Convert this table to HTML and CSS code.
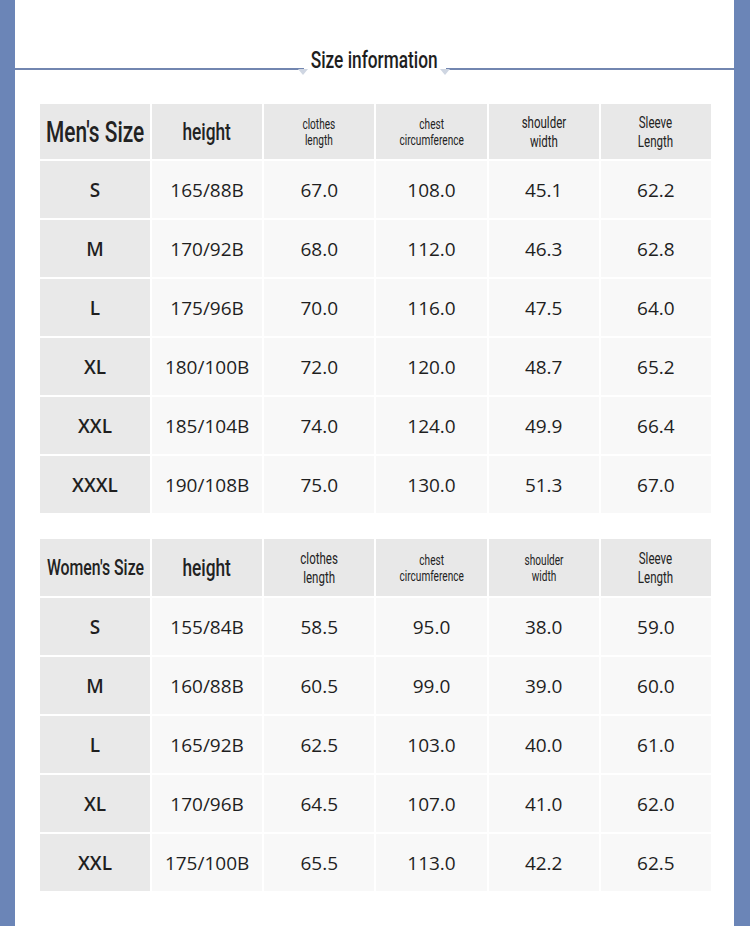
FILE: index.html
```html
<!DOCTYPE html>
<html lang="en">
<head>
<meta charset="utf-8">
<title>Size information</title>
<link rel="stylesheet" href="styles.css">
</head>
<body>
<div class="panel">
  <div class="heading">
    <div class="rule rule-left"></div>
    <div class="title"><span class="cond">Size information</span></div>
    <div class="rule rule-right"></div>
  </div>

  <div class="table men">
    <div class="hd big"><span class="cond">Men's Size</span></div>
    <div class="hd mid"><span class="cond">height</span></div>
    <div class="hd tiny"><span class="cond">clothes<br>length</span></div>
    <div class="hd tiny"><span class="cond">chest<br>circumference</span></div>
    <div class="hd small"><span class="cond">shoulder<br>width</span></div>
    <div class="hd small"><span class="cond">Sleeve<br>Length</span></div>

    <div class="sz">S</div><div class="cell">165/88B</div><div class="cell">67.0</div><div class="cell">108.0</div><div class="cell">45.1</div><div class="cell">62.2</div>
    <div class="sz">M</div><div class="cell">170/92B</div><div class="cell">68.0</div><div class="cell">112.0</div><div class="cell">46.3</div><div class="cell">62.8</div>
    <div class="sz">L</div><div class="cell">175/96B</div><div class="cell">70.0</div><div class="cell">116.0</div><div class="cell">47.5</div><div class="cell">64.0</div>
    <div class="sz">XL</div><div class="cell">180/100B</div><div class="cell">72.0</div><div class="cell">120.0</div><div class="cell">48.7</div><div class="cell">65.2</div>
    <div class="sz">XXL</div><div class="cell">185/104B</div><div class="cell">74.0</div><div class="cell">124.0</div><div class="cell">49.9</div><div class="cell">66.4</div>
    <div class="sz">XXXL</div><div class="cell">190/108B</div><div class="cell">75.0</div><div class="cell">130.0</div><div class="cell">51.3</div><div class="cell">67.0</div>
  </div>

  <div class="table women">
    <div class="hd medium"><span class="cond">Women's Size</span></div>
    <div class="hd mid"><span class="cond">height</span></div>
    <div class="hd small"><span class="cond">clothes<br>length</span></div>
    <div class="hd tiny"><span class="cond">chest<br>circumference</span></div>
    <div class="hd tiny"><span class="cond">shoulder<br>width</span></div>
    <div class="hd small"><span class="cond">Sleeve<br>Length</span></div>

    <div class="sz">S</div><div class="cell">155/84B</div><div class="cell">58.5</div><div class="cell">95.0</div><div class="cell">38.0</div><div class="cell">59.0</div>
    <div class="sz">M</div><div class="cell">160/88B</div><div class="cell">60.5</div><div class="cell">99.0</div><div class="cell">39.0</div><div class="cell">60.0</div>
    <div class="sz">L</div><div class="cell">165/92B</div><div class="cell">62.5</div><div class="cell">103.0</div><div class="cell">40.0</div><div class="cell">61.0</div>
    <div class="sz">XL</div><div class="cell">170/96B</div><div class="cell">64.5</div><div class="cell">107.0</div><div class="cell">41.0</div><div class="cell">62.0</div>
    <div class="sz">XXL</div><div class="cell">175/100B</div><div class="cell">65.5</div><div class="cell">113.0</div><div class="cell">42.2</div><div class="cell">62.5</div>
  </div>
</div>
</body>
</html>
```
FILE: styles.css
```css
html, body {
  margin: 0;
  padding: 0;
}
body {
  background: #6b85b7;
  width: 750px;
  height: 926px;
  overflow: hidden;
}
.panel {
  margin: 0 16px 0 15px;
  height: 926px;
  background: #ffffff;
}
.heading {
  display: flex;
  align-items: flex-end;
  height: 70px;
}
.rule {
  flex: 1;
  border-bottom: 2px solid #7286b0;
  position: relative;
}
.rule-left::after,
.rule-right::before {
  content: "";
  position: absolute;
  top: 1px;
  width: 0;
  height: 0;
  border-left: 5px solid transparent;
  border-right: 5px solid transparent;
  border-top: 6px solid #cfd6e2;
}
.rule-left::after { right: -4px; }
.rule-right::before { left: -6px; }
.title {
  width: 142px;
  display: flex;
  justify-content: center;
  font-family: Roboto, "Liberation Sans", sans-serif;
  font-weight: 500;
  font-size: 24px;
  line-height: 24px;
  margin-bottom: -2px;
  color: #1e1e1e;
  white-space: nowrap;
}
.cond {
  display: inline-block;
  white-space: nowrap;
  transform: scaleX(0.72);
}
.table {
  display: grid;
  grid-template-columns: 110px repeat(5, 1fr);
  grid-auto-rows: 57px;
  gap: 2px;
  width: 671px;
  margin-left: 25px;
}
.men {
  grid-template-rows: 55px;
  margin-top: 34px;
}
.women {
  grid-template-rows: 57px;
  margin-top: 26px;
}
.hd {
  background: #e8e8e8;
  display: flex;
  align-items: center;
  justify-content: center;
  text-align: center;
  font-family: Roboto, "Liberation Sans", sans-serif;
  color: #222;
}
.big { font-size: 29px; font-weight: 500; }
.medium { font-size: 22px; font-weight: 500; }
.mid { font-size: 24px; font-weight: 500; }
.small { font-size: 16px; line-height: 19px; }
.tiny { font-size: 14px; line-height: 16px; }
.sz, .cell {
  display: flex;
  align-items: center;
  justify-content: center;
  font-family: "Open Sans", "Noto Sans", sans-serif;
  font-size: 19px;
  color: #1f1f1f;
}
.sz {
  background: #e9e9e9;
  font-weight: 600;
}
.cell {
  background: #f8f8f8;
}
```
